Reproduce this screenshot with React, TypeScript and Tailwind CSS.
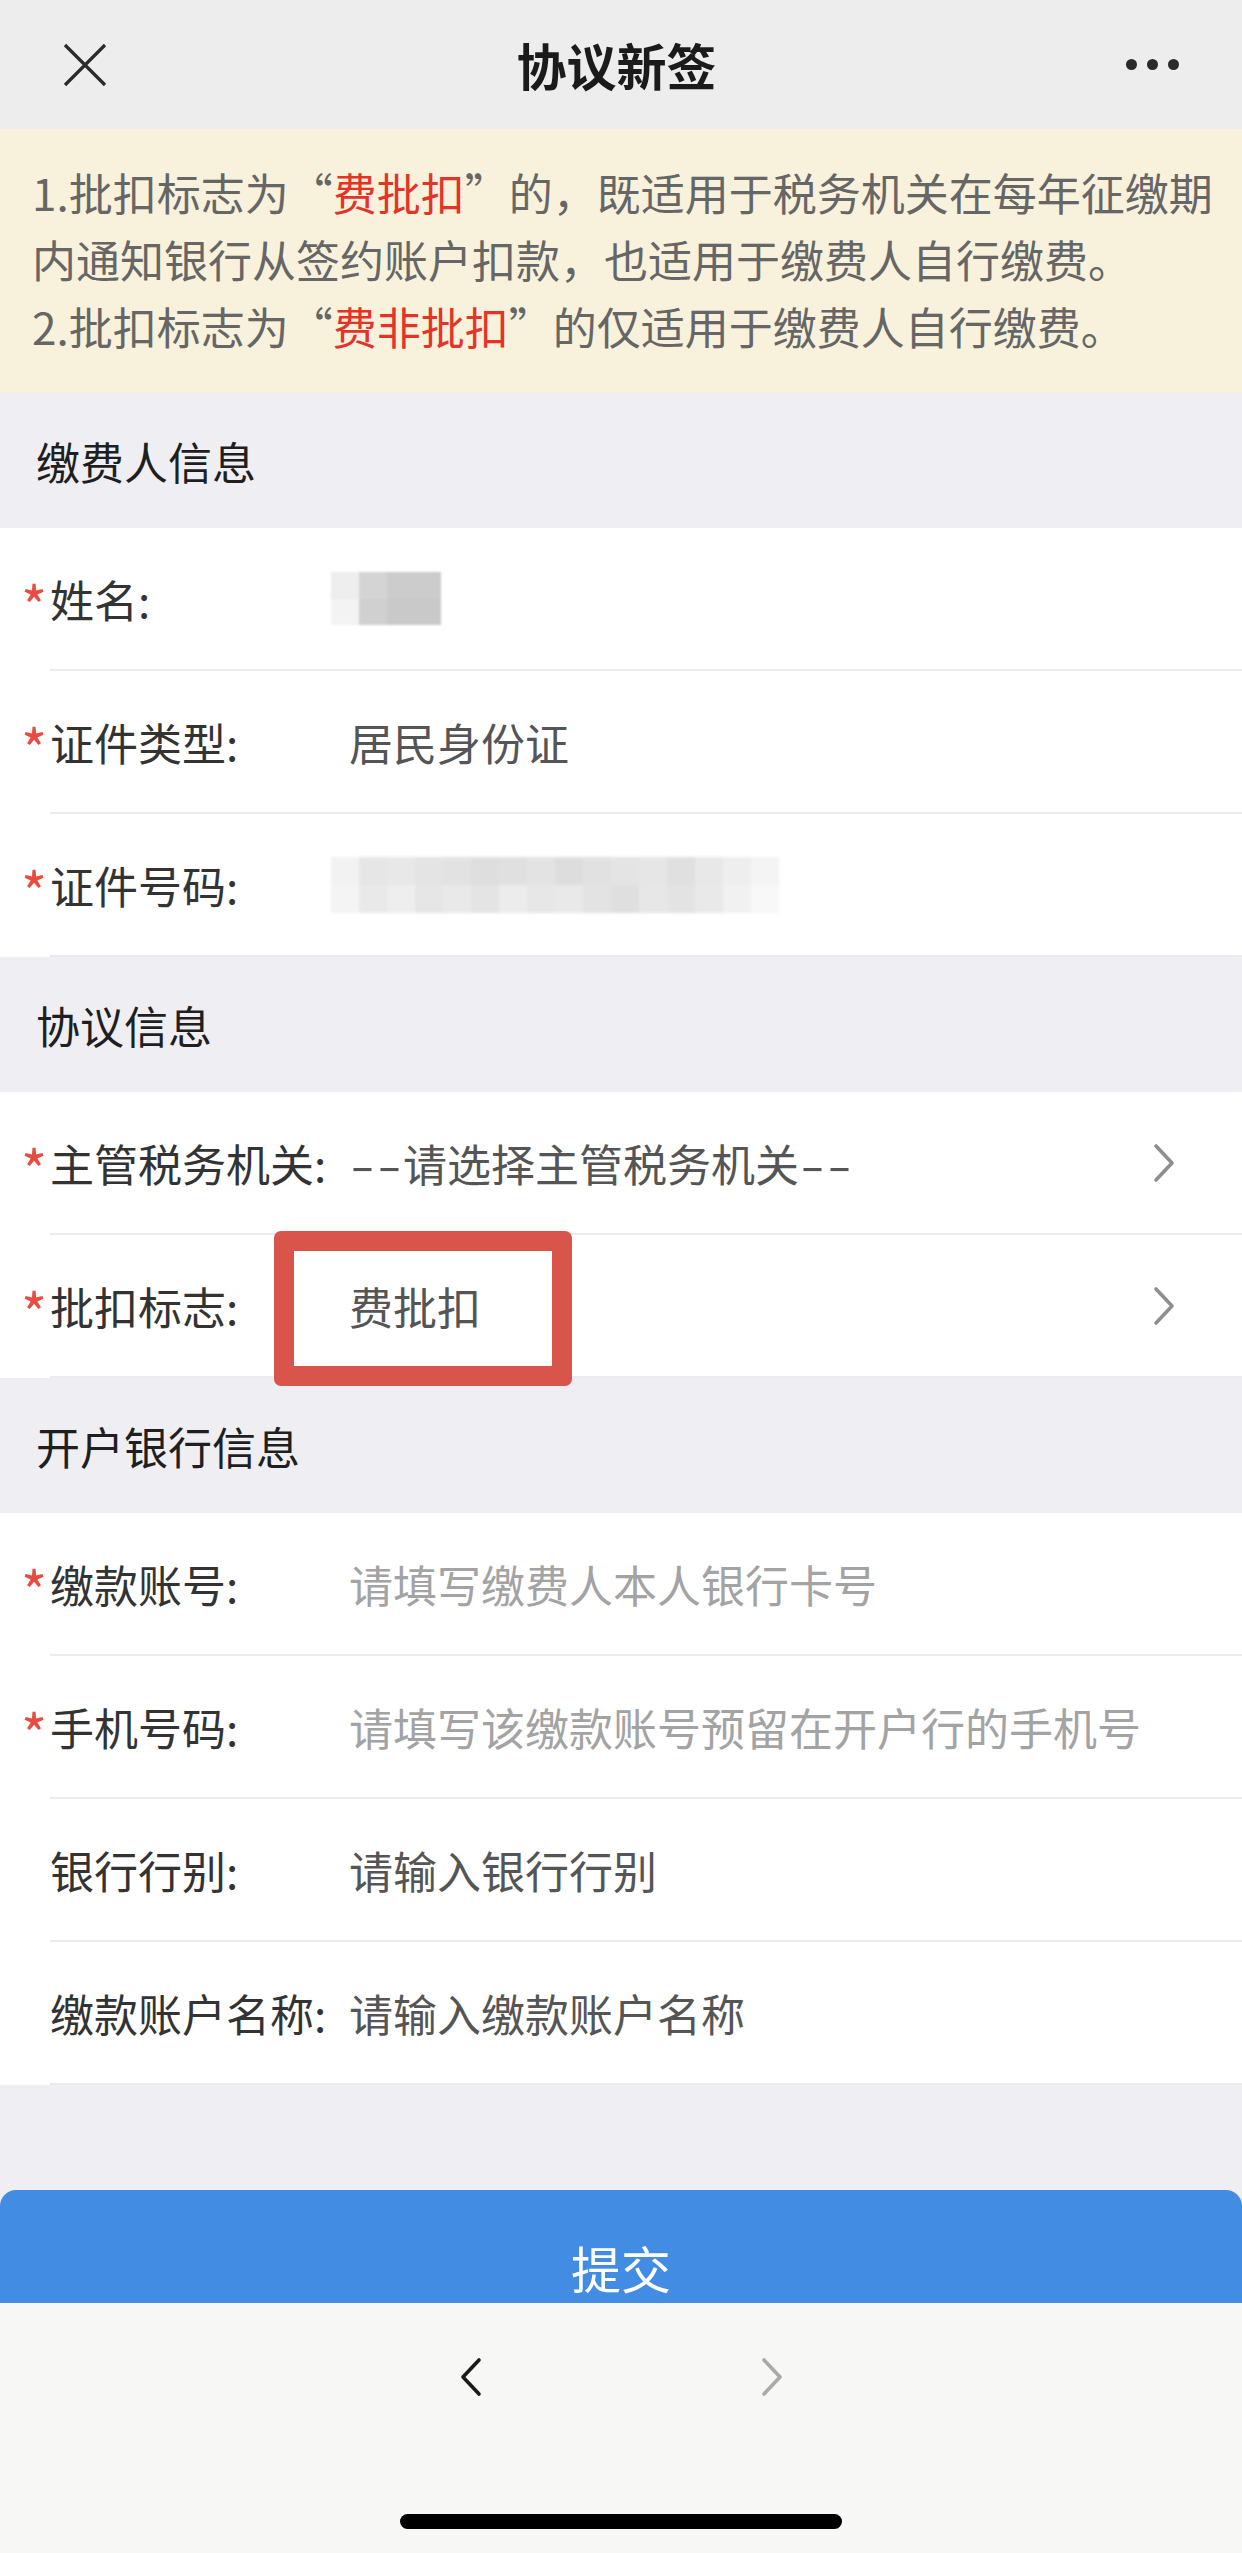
import React from "react";

const font = { fontFamily: '"Noto Sans CJK SC", "Noto Sans", sans-serif' };

type Row = {
  label: string;
  required?: boolean;
  value?: React.ReactNode;
  tone?: "value" | "placeholder";
  arrow?: boolean;
  mosaic?: "name" | "id";
};

const payer: Row[] = [
  { label: "姓名:", required: true, mosaic: "name" },
  { label: "证件类型:", required: true, value: "居民身份证" },
  { label: "证件号码:", required: true, mosaic: "id" },
];

const bank: Row[] = [
  { label: "缴款账号:", required: true, value: "请填写缴费人本人银行卡号", tone: "placeholder" },
  { label: "手机号码:", required: true, value: "请填写该缴款账号预留在开户行的手机号", tone: "placeholder" },
  { label: "银行行别:", value: "请输入银行行别" },
  { label: "缴款账户名称:", value: "请输入缴款账户名称" },
];

const idShades = [
  ["#f2f2f2", "#e6e6e6", "#e8e8e8", "#e4e4e4", "#e2e2e2", "#dedede", "#e0e0e0", "#e3e3e3", "#dddddd", "#e1e1e1", "#e4e4e4", "#e6e6e6", "#e0e0e0", "#e8e8e8", "#eeeeee", "#f4f4f4"],
  ["#f4f4f4", "#e9e9e9", "#eeeeee", "#e6e6e6", "#e9e9e9", "#e4e4e4", "#ececec", "#e7e7e7", "#e9e9e9", "#e3e3e3", "#dfdfdf", "#e7e7e7", "#e3e3e3", "#e9e9e9", "#f1f1f1", "#f8f8f8"],
];

const Chevron = ({ color, className }: { color: string; className?: string }) => (
  <svg viewBox="0 0 24 40" className={className} fill="none">
    <polyline
      points="4,3 20,20 4,37"
      stroke={color}
      strokeWidth="3.6"
      strokeLinecap="round"
      strokeLinejoin="round"
    />
  </svg>
);

const Mosaic = ({ kind }: { kind: "name" | "id" }) => {
  if (kind === "name") {
    return (
      <div className="-ml-[18px] flex flex-col blur-[1px]">
        <div className="flex h-[27px]">
          <div className="w-[28px] bg-[#eeeeee]" />
          <div className="w-[28px] bg-[#d4d4d4]" />
          <div className="w-[54px] bg-[#cccccc]" />
        </div>
        <div className="flex h-[26px]">
          <div className="w-[28px] bg-[#f3f3f3]" />
          <div className="w-[28px] bg-[#d0d0d0]" />
          <div className="w-[54px] bg-[#c9c9c9]" />
        </div>
      </div>
    );
  }
  return (
    <div className="-ml-[18px] flex flex-col blur-[1.5px]">
      {idShades.map((row, i) => (
        <div key={i} className="flex h-[28px]">
          {row.map((c, j) => (
            <div key={j} className="w-[28px]" style={{ backgroundColor: c }} />
          ))}
        </div>
      ))}
    </div>
  );
};

// wide dash, like the select placeholder in the app
const Dash = () => <span className="inline-block w-[27px] scale-x-[1.6] text-center">-</span>;

const SectionHeader = ({ title }: { title: string }) => (
  <div className="flex h-[135px] items-center bg-[#efeff3] pl-[36px] text-[44px] text-[#1f1f1f]">
    {title}
  </div>
);

const FormRow = ({ row, children }: { row: Row; children?: React.ReactNode }) => (
  <div className="relative flex h-[143px] bg-white">
    <div className="flex w-[50px] items-center pl-[21px] pt-[8px] text-[56px] leading-none text-[#ea4b40]">
      {row.required ? "*" : ""}
    </div>
    <div className="flex flex-1 items-center border-b-2 border-[#ececf0]">
      <div className="w-[299px] whitespace-nowrap text-[44px] text-[#333333]">{row.label}</div>
      <div className="flex flex-1 items-center">
        {row.mosaic ? (
          <Mosaic kind={row.mosaic} />
        ) : (
          <span
            className={`whitespace-nowrap text-[44px] ${
              row.tone === "placeholder" ? "text-[#a3a3a3]" : "text-[#555555]"
            }`}
          >
            {row.value}
          </span>
        )}
      </div>
      {row.arrow && <Chevron color="#8e8e8e" className="mr-[66px] h-[40px] w-[24px]" />}
    </div>
    {children}
  </div>
);

export default function App() {
  return (
    <div className="flex min-h-[2553px] w-[1242px] flex-col bg-[#efeff3]" style={font}>
      {/* nav bar */}
      <div className="relative flex h-[129px] items-center justify-between bg-[#ededed] px-[63px]">
        <svg viewBox="0 0 44 44" className="h-[44px] w-[44px]" fill="none">
          <path d="M2 2 L42 42 M42 2 L2 42" stroke="#2a2a2a" strokeWidth="3.2" />
        </svg>
        <div className="text-[50px] font-semibold text-[#1b1b1b]">协议新签</div>
        <div className="flex gap-[10px]">
          <span className="h-[11px] w-[11px] rounded-full bg-[#2a2a2a]" />
          <span className="h-[11px] w-[11px] rounded-full bg-[#2a2a2a]" />
          <span className="h-[11px] w-[11px] rounded-full bg-[#2a2a2a]" />
        </div>
      </div>

      {/* notice */}
      <div className="bg-[#f8f2dc] px-[32px] pb-[33px] pt-[30px] text-[44px] leading-[67px] text-[#666666]">
        <div className="whitespace-nowrap">
          1.批扣标志为“<span className="text-[#e5332a]">费批扣</span>”的，既适用于税务机关在每年征缴期
        </div>
        <div className="whitespace-nowrap">内通知银行从签约账户扣款，也适用于缴费人自行缴费。</div>
        <div className="whitespace-nowrap">
          2.批扣标志为“<span className="text-[#e5332a]">费非批扣</span>”的仅适用于缴费人自行缴费。
        </div>
      </div>

      <SectionHeader title="缴费人信息" />
      {payer.map((r) => (
        <FormRow key={r.label} row={r} />
      ))}

      <SectionHeader title="协议信息" />
      <FormRow
        row={{
          label: "主管税务机关:",
          required: true,
          value: (
            <>
              <Dash />
              <Dash />
              请选择主管税务机关
              <Dash />
              <Dash />
            </>
          ),
          arrow: true,
        }}
      />
      <FormRow row={{ label: "批扣标志:", required: true, value: "费批扣", arrow: true }}>
        <div className="absolute left-[274px] top-[-4px] z-10 h-[155px] w-[298px] rounded-[7px] border-[20px] border-[#d9544a]" />
      </FormRow>

      <SectionHeader title="开户银行信息" />
      {bank.map((r) => (
        <FormRow key={r.label} row={r} />
      ))}

      <div className="h-[105px]" />

      {/* submit button, partly hidden under the toolbar */}
      <div className="h-[113px] overflow-hidden">
        <div className="h-[200px] rounded-t-[16px] bg-[#428ce3] pt-[52px] text-center text-[50px] leading-[50px] text-white">
          提交
        </div>
      </div>

      {/* browser toolbar */}
      <div className="flex h-[250px] flex-col items-center bg-[#f7f7f5]">
        <div className="mt-[49px] flex gap-[277px]">
          <Chevron color="#1a1a1a" className="h-[50px] w-[24px] rotate-180" />
          <Chevron color="#aaaaaa" className="h-[50px] w-[24px]" />
        </div>
        <div className="mt-[112px] h-[15px] w-[442px] rounded-full bg-black" />
      </div>
    </div>
  );
}
